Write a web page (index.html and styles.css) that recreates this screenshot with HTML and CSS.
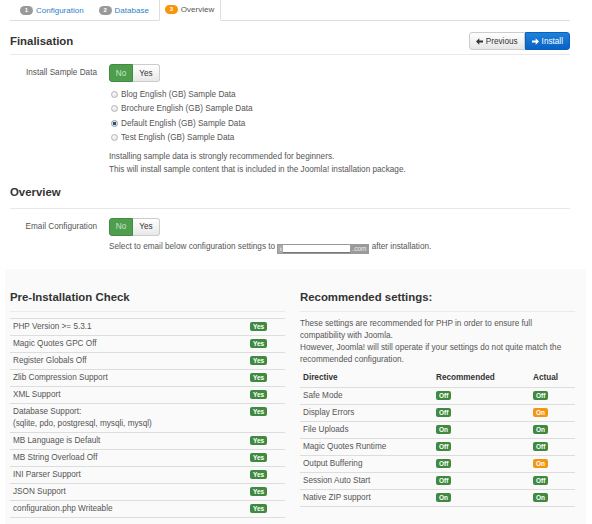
FILE: index.html
```html
<!DOCTYPE html>
<html>
<head>
<meta charset="utf-8">
<link rel="stylesheet" href="styles.css">
</head>
<body>
<ul class="tabs">
  <li class="tab"><span class="badge">1</span><span>Configuration</span></li>
  <li class="tab"><span class="badge">2</span><span>Database</span></li>
  <li class="tab active"><span class="badge badge-orange">3</span><span>Overview</span></li>
</ul>

<div class="head head-first">
  <h3>Finalisation</h3>
  <div class="btns">
    <button class="btn"><svg width="7" height="7" viewBox="0 0 7 7"><path d="M0 3.5L3.3 0.3V2.4H7V4.6H3.3V6.7Z" fill="#333"/></svg>Previous</button>
    <button class="btn btn-primary"><svg width="7" height="7" viewBox="0 0 7 7"><path d="M7 3.5L3.7 0.3V2.4H0V4.6H3.7V6.7Z" fill="#fff"/></svg>Install</button>
  </div>
</div>

<div class="row row-first">
  <div class="lbl">Install Sample Data</div>
  <div class="ctrl">
    <div class="toggle"><span class="t-no">No</span><span class="t-yes">Yes</span></div>
    <ul class="radios">
      <li><span class="radio"></span>Blog English (GB) Sample Data</li>
      <li><span class="radio"></span>Brochure English (GB) Sample Data</li>
      <li><span class="radio checked"></span>Default English (GB) Sample Data</li>
      <li><span class="radio"></span>Test English (GB) Sample Data</li>
    </ul>
    <p class="help">Installing sample data is strongly recommended for beginners.<br>This will install sample content that is included in the Joomla! installation package.</p>
  </div>
</div>

<div class="head head-second">
  <h3>Overview</h3>
</div>

<div class="row row-email">
  <div class="lbl">Email Configuration</div>
  <div class="ctrl">
    <div class="toggle"><span class="t-no">No</span><span class="t-yes">Yes</span></div>
    <p class="email-text">Select to email below configuration settings to <span class="redact"><span class="r-l">t</span><span class="r-m"></span><span class="r-com">.com</span></span> after installation.</p>
  </div>
</div>

<div class="band">
  <div class="col">
    <h3 class="col-head">Pre-Installation Check</h3>
    <table class="tbl tbl-check">
      <tbody>
        <tr><td>PHP Version &gt;= 5.3.1</td><td class="c-badge"><span class="lab">Yes</span></td></tr>
        <tr><td>Magic Quotes GPC Off</td><td class="c-badge"><span class="lab">Yes</span></td></tr>
        <tr><td>Register Globals Off</td><td class="c-badge"><span class="lab">Yes</span></td></tr>
        <tr><td>Zlib Compression Support</td><td class="c-badge"><span class="lab">Yes</span></td></tr>
        <tr><td>XML Support</td><td class="c-badge"><span class="lab">Yes</span></td></tr>
        <tr><td>Database Support:<br>(sqlite, pdo, postgresql, mysqli, mysql)</td><td class="c-badge"><span class="lab">Yes</span></td></tr>
        <tr><td>MB Language is Default</td><td class="c-badge"><span class="lab">Yes</span></td></tr>
        <tr><td>MB String Overload Off</td><td class="c-badge"><span class="lab">Yes</span></td></tr>
        <tr><td>INI Parser Support</td><td class="c-badge"><span class="lab">Yes</span></td></tr>
        <tr><td>JSON Support</td><td class="c-badge"><span class="lab">Yes</span></td></tr>
        <tr><td>configuration.php Writeable</td><td class="c-badge"><span class="lab">Yes</span></td></tr>
      </tbody>
    </table>
  </div>
  <div class="col">
    <h3 class="col-head">Recommended settings:</h3>
    <p class="rec-text">These settings are recommended for PHP in order to ensure full<br>compatibility with Joomla.<br>However, Joomla! will still operate if your settings do not quite match the<br>recommended configuration.</p>
    <table class="tbl tbl-rec">
      <thead>
        <tr><th class="c-dir">Directive</th><th class="c-recm">Recommended</th><th>Actual</th></tr>
      </thead>
      <tbody>
        <tr><td>Safe Mode</td><td><span class="lab">Off</span></td><td><span class="lab">Off</span></td></tr>
        <tr><td>Display Errors</td><td><span class="lab">Off</span></td><td><span class="lab lab-warn">On</span></td></tr>
        <tr><td>File Uploads</td><td><span class="lab">On</span></td><td><span class="lab">On</span></td></tr>
        <tr><td>Magic Quotes Runtime</td><td><span class="lab">Off</span></td><td><span class="lab">Off</span></td></tr>
        <tr><td>Output Buffering</td><td><span class="lab">Off</span></td><td><span class="lab lab-warn">On</span></td></tr>
        <tr><td>Session Auto Start</td><td><span class="lab">Off</span></td><td><span class="lab">Off</span></td></tr>
        <tr><td>Native ZIP support</td><td><span class="lab">On</span></td><td><span class="lab">On</span></td></tr>
      </tbody>
    </table>
  </div>
</div>
</body>
</html>
```

FILE: styles.css
```css
* { box-sizing: border-box; }

body {
  margin: 0;
  width: 592px;
  height: 524px;
  overflow: hidden;
  background: #fff;
  font-family: "Liberation Sans", Arial, sans-serif;
  font-size: 8.2px;
  color: #555;
}

h3 {
  margin: 0;
  font-size: 11.4px;
  line-height: 12px;
  font-weight: bold;
  color: #333;
}

/* Tabs */
.tabs {
  display: flex;
  list-style: none;
  margin: 0 22px 0 10px;
  padding: 0 0 0 5px;
  height: 21px;
  border-bottom: 1px solid #ddd;
}
.tab {
  display: flex;
  align-items: center;
  gap: 3px;
  height: 20px;
  padding: 0 6px 0 5px;
  margin-right: 4px;
  color: #2f7fc8;
  font-size: 8px;
}
.tab.active {
  height: 21px;
  margin-bottom: -1px;
  background: #fff;
  border: 1px solid #ddd;
  border-top: none;
  border-bottom-color: #fff;
  color: #555;
  padding: 0 6px 1px 5px;
}
.badge {
  display: inline-block;
  width: 13px;
  height: 9px;
  line-height: 9px;
  border-radius: 5px;
  background: #999;
  color: #fff;
  font-size: 6px;
  font-weight: bold;
  text-align: center;
}
.badge-orange { background: #f89406; }

/* Section heads */
.head {
  display: flex;
  align-items: center;
  justify-content: space-between;
  margin: 0 22px 0 10px;
  border-bottom: 1px solid #e8e8e8;
}
.head-first { padding: 11px 0 4px; }
.head-second { padding: 10px 0 10px; }

.btns { display: flex; }
.btn {
  display: inline-flex;
  align-items: center;
  gap: 3px;
  height: 18px;
  padding: 0 6px;
  margin: 0;
  font-family: "Liberation Sans", Arial, sans-serif;
  font-size: 8.2px;
  color: #333;
  background: linear-gradient(#ffffff, #e6e6e6);
  border: 1px solid #ccc;
  border-radius: 3px 0 0 3px;
}
.btn-primary {
  color: #fff;
  background: linear-gradient(#1d82da, #0a62c4);
  border-color: #0a5fbf;
  border-radius: 0 3px 3px 0;
  padding: 0 6px 0 6px;
}

/* Form rows */
.row {
  display: flex;
  margin-left: 10px;
}
.row-first { margin-top: 9px; }
.row-email { margin-top: 9px; }
.lbl {
  width: 99px;
  padding-right: 12px;
  text-align: right;
  line-height: 18px;
  color: #555;
  white-space: nowrap;
}
.toggle {
  display: inline-flex;
  height: 18px;
}
.t-no, .t-yes {
  display: inline-flex;
  align-items: center;
  justify-content: center;
  height: 18px;
}
.t-no {
  width: 24px;
  background: #4e9e4e;
  border: 1px solid #438a43;
  border-radius: 3px 0 0 3px;
  color: #c9e6c9;
}
.t-yes {
  width: 27px;
  background: linear-gradient(#ffffff, #e8e8e8);
  border: 1px solid #ccc;
  border-left: none;
  border-radius: 0 3px 3px 0;
  color: #333;
}

.radios {
  list-style: none;
  margin: 5px 0 0;
  padding: 0;
}
.radios li {
  display: flex;
  align-items: center;
  gap: 3px;
  height: 14.5px;
  padding-left: 2px;
}
.radio {
  width: 7px;
  height: 7px;
  border-radius: 50%;
  border: 1px solid #b5b5b5;
  background: radial-gradient(circle at 40% 35%, #fafafa, #dcdcdc);
}
.radio.checked {
  border-color: #8a9bb0;
  background: radial-gradient(circle, #2c4f7a 0, #2c4f7a 1.6px, #e8e8e8 2px);
}
.help {
  margin: 4.5px 0 0;
  line-height: 13px;
}
.email-text {
  margin: 5px 0 0;
  line-height: 12px;
}
.redact {
  display: inline-flex;
  vertical-align: -2px;
  width: 92px;
  height: 10px;
  border: 1px solid #9a9a9a;
  background: #fff;
}
.r-l {
  width: 5px;
  background: #a9a9a9;
  color: #fff;
  font-size: 6px;
  line-height: 8px;
  text-align: center;
}
.r-m {
  flex: 1;
  border-bottom: 1px solid #777;
}
.r-com {
  width: 18px;
  background: #9a9a9a;
  color: #eee;
  font-size: 6.5px;
  line-height: 8px;
  text-align: center;
}

/* Lower band */
.band {
  display: grid;
  grid-template-columns: 275px 275px;
  column-gap: 15px;
  margin: 15px 6px 0 5px;
  padding: 22px 11px 10px 5px;
  background: #fafafa;
  height: 260px;
}
.col-head {
  padding-bottom: 8px;
  border-bottom: 1px solid #eaeaea;
}
.tbl {
  width: 100%;
  border-collapse: collapse;
}
.tbl td, .tbl th {
  padding: 2px 3px;
  line-height: 12px;
  text-align: left;
  vertical-align: top;
}
.tbl td { border-top: 1px solid #ddd; }
.tbl tbody tr:last-child td { border-bottom: 1px solid #ddd; }
.tbl th {
  color: #333;
  font-weight: bold;
  padding-top: 2px;
  padding-bottom: 3px;
}
.tbl-check { margin-top: 6px; }
.c-badge { width: 38px; }
.rec-text {
  margin: 6px 0 0;
  line-height: 12px;
  white-space: nowrap;
}
.tbl-rec { margin-top: 4px; }
.c-dir { width: 133px; }
.c-recm { width: 97px; }

.lab {
  display: inline-block;
  height: 9px;
  line-height: 9px;
  margin-top: 1.5px;
  padding: 0 3px;
  border-radius: 2px;
  background: #3f8a3f;
  color: #fff;
  font-size: 6.5px;
  font-weight: bold;
  vertical-align: top;
}
.lab-warn { background: #f39613; }
```
